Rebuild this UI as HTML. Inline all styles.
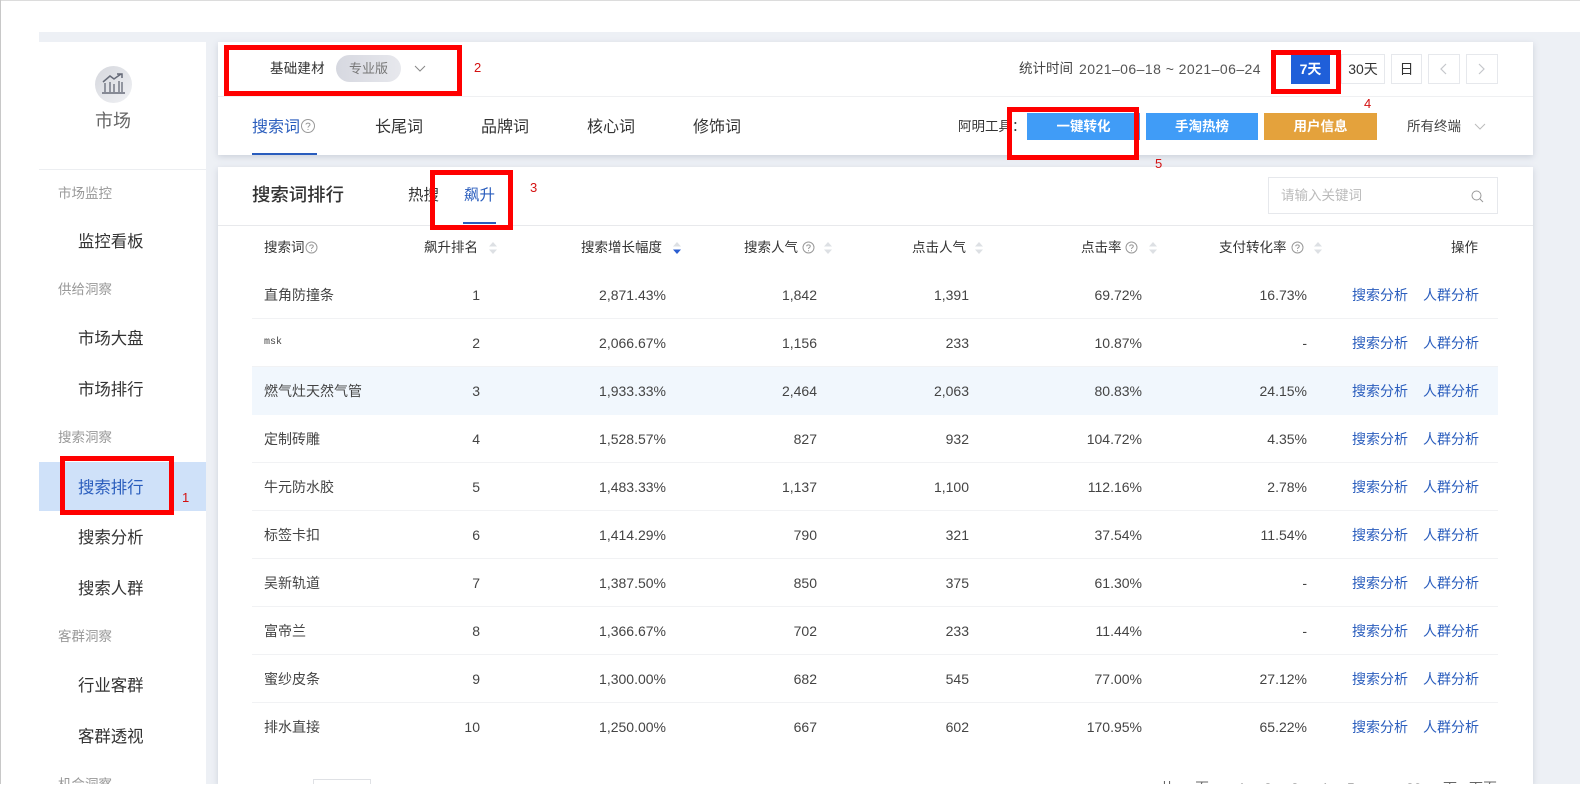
<!DOCTYPE html>
<html lang="zh"><head><meta charset="utf-8"><title>搜索排行</title>
<style>
*{box-sizing:border-box}
html,body{margin:0;padding:0;background:#fff;width:1580px;height:810px;overflow:hidden;font-family:"Liberation Sans","Noto Sans CJK SC",sans-serif;color:#333}
.a{position:absolute;white-space:nowrap;line-height:1}
#bg{position:absolute;left:39px;top:32px;width:1541px;height:752px;background:#edf0f5;overflow:hidden}
.w{position:absolute;background:#fff}
.card{box-shadow:0 2px 6px rgba(130,140,160,.3)}
.g{font-size:13.5px;color:#999;left:58px}
.m{font-size:16.4px;color:#333;left:78px}
.tab{font-size:16px;color:#333;top:120px}
.btn{position:absolute;top:113px;height:27px;color:#fff;font-size:13.5px;font-weight:bold;text-align:center;line-height:27px}
.dbox{position:absolute;top:54px;height:30px;background:#fff;border:1px solid #e6e8ec;font-size:14px;text-align:center;line-height:28px;color:#333}
.rbox{position:absolute;border:5px solid #f00;background:transparent}
.red{position:absolute;color:#d41111;font-size:13px;line-height:1}
.th{position:absolute;top:241px;font-size:13.5px;line-height:14px;white-space:nowrap;color:#333}
.row{position:absolute;left:252px;width:1246px;height:48px;border-bottom:1px solid #f1f2f4;font-size:14px;color:#444}
.row span{position:absolute;top:17px;line-height:14px;white-space:nowrap}
.n{left:12px}
.r{left:178px;width:50px;text-align:right}
.s2{right:832px}.s3{right:681px}.s4{right:529px}.s5{right:356px}.s6{right:191px}
.l1{left:1100px;color:#2a5dbd}.l2{left:1171px;color:#2a5dbd}
#foot{position:absolute;left:0;top:784px;width:1580px;height:26px;background:#fff}
svg{position:absolute;overflow:visible}
.pg{position:absolute;top:781px;font-size:14px;color:#666;line-height:14px}
</style></head>
<body>
<div style="position:absolute;left:0;top:0;width:1580px;height:1px;background:#dcdcdc"></div>
<div style="position:absolute;left:0;top:0;width:1px;height:810px;background:#c8c8c8"></div>
<div id="bg"></div>

<!-- sidebar -->
<div class="w" style="left:39px;top:42px;width:167px;height:742px"></div>
<div style="position:absolute;left:39px;top:169px;width:167px;height:1px;background:#eceef1"></div>
<div style="position:absolute;left:39px;top:462px;width:167px;height:49px;background:#cfe1f9"></div>
<div style="position:absolute;left:95px;top:66px;width:37px;height:37px;border-radius:50%;background:linear-gradient(135deg,#d5d7dd,#f0f1f4)"></div>
<svg style="left:100px;top:72px" width="27" height="24" viewBox="0 0 27 24" fill="none" stroke="#666b78" stroke-width="1.5">
<path d="M3 10 L10 4 L14 7 L21 2 M17 2 H22 V6"/><path d="M5 11V20M10 10V20M14 12V20M19 9V20M22 10V20" stroke-width="1.3"/><path d="M2 21H25" stroke-width="1.6"/></svg>
<div class="a" style="left:95px;top:112px;font-size:18px;color:#666">市场</div>
<div class="a g" style="top:187px">市场监控</div>
<div class="a m" style="top:234px">监控看板</div>
<div class="a g" style="top:283px">供给洞察</div>
<div class="a m" style="top:331px">市场大盘</div>
<div class="a m" style="top:382px">市场排行</div>
<div class="a g" style="top:431px">搜索洞察</div>
<div class="a m" style="top:480px;color:#2a5dbd">搜索排行</div>
<div class="a m" style="top:530px">搜索分析</div>
<div class="a m" style="top:581px">搜索人群</div>
<div class="a g" style="top:630px">客群洞察</div>
<div class="a m" style="top:678px">行业客群</div>
<div class="a m" style="top:729px">客群透视</div>
<div class="a g" style="top:778px">机会洞察</div>

<!-- header card -->
<div class="w card" style="left:218px;top:42px;width:1315px;height:113px"></div>
<div style="position:absolute;left:218px;top:96px;width:1315px;height:1px;background:#eff0f2"></div>
<div class="a" style="left:270px;top:62px;font-size:13.5px;letter-spacing:.2px">基础建材</div>
<div class="a" style="left:336px;top:55px;width:65px;height:27px;border-radius:14px;background:linear-gradient(90deg,#d6d8e0,#e7e8ed);font-size:13px;line-height:27px;text-align:center;color:#777">专业版</div>
<svg style="left:414px;top:65px" width="12" height="8" fill="none" stroke="#888" stroke-width="1"><path d="M1 1L6 6L11 1"/></svg>
<div class="a" style="left:1019px;top:62px;font-size:13.5px;color:#444">统计时间</div>
<div class="a" style="left:1079px;top:62px;font-size:14px;color:#555;letter-spacing:.45px">2021–06–18 ~ 2021–06–24</div>
<div class="dbox" style="left:1291px;width:39px;background:#1f5fd9;border-color:#1f5fd9;color:#fff;font-weight:bold">7天</div>
<div class="dbox" style="left:1341px;width:44px">30天</div>
<div class="dbox" style="left:1391px;width:31px">日</div>
<div class="dbox" style="left:1428px;width:32px"></div>
<div class="dbox" style="left:1466px;width:32px"></div>
<svg style="left:1440px;top:63px" width="8" height="12" fill="none" stroke="#c4c6cb" stroke-width="1.2"><path d="M6 1L1 6L6 11"/></svg>
<svg style="left:1478px;top:63px" width="8" height="12" fill="none" stroke="#c4c6cb" stroke-width="1.2"><path d="M1 1L6 6L1 11"/></svg>

<div class="a tab" style="left:252px;color:#2a5dbd">搜索词</div>
<svg style="left:301px;top:119px" width="14" height="14" fill="none" stroke="#999" stroke-width="1"><circle cx="7" cy="7" r="6.5"/><path d="M5 5.5C5 3.6 9 3.6 9 5.6C9 7 7 7 7 8.6M7 10v1"/></svg>
<div style="position:absolute;left:252px;top:153px;width:65px;height:2px;background:#2a5dbd"></div>
<div class="a tab" style="left:375px">长尾词</div>
<div class="a tab" style="left:481px">品牌词</div>
<div class="a tab" style="left:587px">核心词</div>
<div class="a tab" style="left:693px">修饰词</div>
<div class="a" style="left:958px;top:120px;font-size:13.5px">阿明工具：</div>
<div class="btn" style="left:1027px;width:113px;background:#409cf7">一键转化</div>
<div class="btn" style="left:1146px;width:112px;background:#409cf7">手淘热榜</div>
<div class="btn" style="left:1264px;width:113px;background:#e4a23c">用户信息</div>
<div class="a" style="left:1407px;top:120px;font-size:13.5px;color:#444">所有终端</div>
<svg style="left:1474px;top:123px" width="12" height="8" fill="none" stroke="#bbb" stroke-width="1"><path d="M1 1L6 6L11 1"/></svg>

<!-- main card -->
<div class="w card" style="left:218px;top:167px;width:1315px;height:617px"></div>
<div style="position:absolute;left:218px;top:225px;width:1315px;height:1px;background:#e8e9ec"></div>
<div class="a" style="left:252px;top:186px;font-size:18.4px;font-weight:500">搜索词排行</div>
<div class="a" style="left:408px;top:188px;font-size:15.5px">热搜</div>
<div class="a" style="left:464px;top:188px;font-size:15.5px;color:#2a5dbd">飙升</div>
<div style="position:absolute;left:463px;top:222px;width:33px;height:2px;background:#2a5dbd"></div>
<div style="position:absolute;left:1268px;top:177px;width:230px;height:37px;border:1px solid #e6e8ec;background:#fff"></div>
<div class="a" style="left:1281px;top:189px;font-size:13.5px;color:#bbb">请输入关键词</div>
<svg style="left:1471px;top:190px" width="13" height="13" fill="none" stroke="#999" stroke-width="1"><circle cx="5.5" cy="5.5" r="4.5"/><path d="M9 9L12 12"/></svg>

<!-- table header -->
<div class="th" style="left:264px">搜索词</div>
<svg style="left:305px;top:241px" width="13" height="13" fill="none" stroke="#999" stroke-width="1"><circle cx="6.5" cy="6.5" r="5.5"/><path d="M4.7 5.2C4.7 3.4 8.3 3.4 8.3 5.2C8.3 6.5 6.5 6.5 6.5 8M6.5 9.2v1"/></svg>
<div class="th" style="left:424px">飙升排名</div>
<svg style="left:489px;top:242px" width="8" height="12" fill="#dde0e4"><path d="M4 0L8 4.5H0ZM0 7.5H8L4 12Z"/></svg>
<div class="th" style="left:581px">搜索增长幅度</div>
<svg style="left:673px;top:242px" width="8" height="12"><path fill="#dde0e4" d="M4 0L8 4.5H0Z"/><path fill="#2a5dd0" d="M0 7.5H8L4 12Z"/></svg>
<div class="th" style="left:744px">搜索人气</div>
<svg style="left:802px;top:241px" width="13" height="13" fill="none" stroke="#999" stroke-width="1"><circle cx="6.5" cy="6.5" r="5.5"/><path d="M4.7 5.2C4.7 3.4 8.3 3.4 8.3 5.2C8.3 6.5 6.5 6.5 6.5 8M6.5 9.2v1"/></svg>
<svg style="left:824px;top:242px" width="8" height="12" fill="#dde0e4"><path d="M4 0L8 4.5H0ZM0 7.5H8L4 12Z"/></svg>
<div class="th" style="left:912px">点击人气</div>
<svg style="left:975px;top:242px" width="8" height="12" fill="#dde0e4"><path d="M4 0L8 4.5H0ZM0 7.5H8L4 12Z"/></svg>
<div class="th" style="left:1081px">点击率</div>
<svg style="left:1125px;top:241px" width="13" height="13" fill="none" stroke="#999" stroke-width="1"><circle cx="6.5" cy="6.5" r="5.5"/><path d="M4.7 5.2C4.7 3.4 8.3 3.4 8.3 5.2C8.3 6.5 6.5 6.5 6.5 8M6.5 9.2v1"/></svg>
<svg style="left:1149px;top:242px" width="8" height="12" fill="#dde0e4"><path d="M4 0L8 4.5H0ZM0 7.5H8L4 12Z"/></svg>
<div class="th" style="left:1219px">支付转化率</div>
<svg style="left:1291px;top:241px" width="13" height="13" fill="none" stroke="#999" stroke-width="1"><circle cx="6.5" cy="6.5" r="5.5"/><path d="M4.7 5.2C4.7 3.4 8.3 3.4 8.3 5.2C8.3 6.5 6.5 6.5 6.5 8M6.5 9.2v1"/></svg>
<svg style="left:1314px;top:242px" width="8" height="12" fill="#dde0e4"><path d="M4 0L8 4.5H0ZM0 7.5H8L4 12Z"/></svg>
<div class="th" style="left:1451px">操作</div>

<!-- rows -->
<div class="row" style="top:271px"><span class="n">直角防撞条</span><span class="r">1</span><span class="s2">2,871.43%</span><span class="s3">1,842</span><span class="s4">1,391</span><span class="s5">69.72%</span><span class="s6">16.73%</span><span class="l1">搜索分析</span><span class="l2">人群分析</span></div>
<div class="row" style="top:319px"><span class="n" style="font-size:10px;font-family:'Liberation Mono',monospace">msk</span><span class="r">2</span><span class="s2">2,066.67%</span><span class="s3">1,156</span><span class="s4">233</span><span class="s5">10.87%</span><span class="s6">-</span><span class="l1">搜索分析</span><span class="l2">人群分析</span></div>
<div class="row" style="top:367px;background:#f1f7fd;border-bottom:0"><span class="n">燃气灶天然气管</span><span class="r">3</span><span class="s2">1,933.33%</span><span class="s3">2,464</span><span class="s4">2,063</span><span class="s5">80.83%</span><span class="s6">24.15%</span><span class="l1">搜索分析</span><span class="l2">人群分析</span></div>
<div class="row" style="top:415px"><span class="n">定制砖雕</span><span class="r">4</span><span class="s2">1,528.57%</span><span class="s3">827</span><span class="s4">932</span><span class="s5">104.72%</span><span class="s6">4.35%</span><span class="l1">搜索分析</span><span class="l2">人群分析</span></div>
<div class="row" style="top:463px"><span class="n">牛元防水胶</span><span class="r">5</span><span class="s2">1,483.33%</span><span class="s3">1,137</span><span class="s4">1,100</span><span class="s5">112.16%</span><span class="s6">2.78%</span><span class="l1">搜索分析</span><span class="l2">人群分析</span></div>
<div class="row" style="top:511px"><span class="n">标签卡扣</span><span class="r">6</span><span class="s2">1,414.29%</span><span class="s3">790</span><span class="s4">321</span><span class="s5">37.54%</span><span class="s6">11.54%</span><span class="l1">搜索分析</span><span class="l2">人群分析</span></div>
<div class="row" style="top:559px"><span class="n">吴新轨道</span><span class="r">7</span><span class="s2">1,387.50%</span><span class="s3">850</span><span class="s4">375</span><span class="s5">61.30%</span><span class="s6">-</span><span class="l1">搜索分析</span><span class="l2">人群分析</span></div>
<div class="row" style="top:607px"><span class="n">富帝兰</span><span class="r">8</span><span class="s2">1,366.67%</span><span class="s3">702</span><span class="s4">233</span><span class="s5">11.44%</span><span class="s6">-</span><span class="l1">搜索分析</span><span class="l2">人群分析</span></div>
<div class="row" style="top:655px"><span class="n">蜜纱皮条</span><span class="r">9</span><span class="s2">1,300.00%</span><span class="s3">682</span><span class="s4">545</span><span class="s5">77.00%</span><span class="s6">27.12%</span><span class="l1">搜索分析</span><span class="l2">人群分析</span></div>
<div class="row" style="top:703px;border-bottom:0"><span class="n">排水直接</span><span class="r">10</span><span class="s2">1,250.00%</span><span class="s3">667</span><span class="s4">602</span><span class="s5">170.95%</span><span class="s6">65.22%</span><span class="l1">搜索分析</span><span class="l2">人群分析</span></div>

<!-- pagination, clipped -->
<div style="position:absolute;left:313px;top:779px;width:58px;height:20px;border:1px solid #dfe1e5"></div>
<div class="pg" style="left:1160px">共</div>
<div class="pg" style="left:1195px">页</div>
<div class="pg" style="left:1238px">1</div>
<div class="pg" style="left:1264px">2</div>
<div class="pg" style="left:1291px">3</div>
<div class="pg" style="left:1320px">4</div>
<div class="pg" style="left:1347px">5</div>
<div class="pg" style="left:1406px">20</div>
<div class="pg" style="left:1443px">下</div>
<div class="pg" style="left:1469px">下页</div>

<div id="foot"></div>

<!-- annotations -->
<div class="rbox" style="left:60px;top:456px;width:114px;height:59px"></div>
<div class="rbox" style="left:224px;top:45px;width:238px;height:51px"></div>
<div class="rbox" style="left:430px;top:170px;width:83px;height:60px"></div>
<div class="rbox" style="left:1271px;top:50px;width:70px;height:44px"></div>
<div class="rbox" style="left:1007px;top:107px;width:132px;height:53px"></div>
<div class="red" style="left:182px;top:491px">1</div>
<div class="red" style="left:474px;top:61px">2</div>
<div class="red" style="left:530px;top:181px">3</div>
<div class="red" style="left:1364px;top:97px">4</div>
<div class="red" style="left:1155px;top:157px">5</div>
</body></html>
